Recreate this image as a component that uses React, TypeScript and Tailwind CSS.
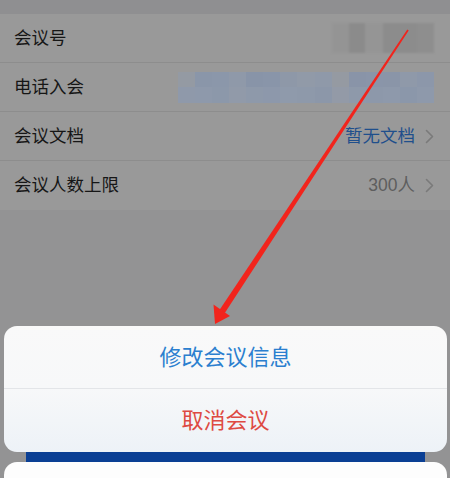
const rows = [
  { label: "会议号", kind: "blurGray" },
  { label: "电话入会", kind: "blurBlue" },
  { label: "会议文档", kind: "doc" },
  { label: "会议人数上限", kind: "limit" },
];

const blueTop = ["#949aa3", "#8a96a9", "#8b97aa", "#8f99a9", "#8894a8", "#8995a9", "#8e98a8", "#919aa8", "#8f99a9", "#959aa2", "#8994a8", "#8a95a9", "#8a95a8", "#8f99a9", "#8c97aa"];
const blueBottom = ["#8f99aa", "#8e99ab", "#8c98aa", "#919aa9", "#8e99aa", "#8d98ab", "#8f9aab", "#8e99aa", "#8c97a9", "#939aa7", "#8e99aa", "#8d98aa", "#8e99ab", "#8b97aa", "#8e99ab"];

function Chevron() {
  return (
    <svg width="9" height="15" viewBox="0 0 9 15" className="ml-[10px]">
      <path d="M1.5 1.5l6 6-6 6" fill="none" stroke="#7a7a7a" strokeWidth="1.6" strokeLinecap="round" strokeLinejoin="round" />
    </svg>
  );
}

function RowValue({ kind }: { kind: string }) {
  if (kind === "blurGray") {
    return (
      <div className="flex h-[30px] items-stretch blur-[1px]">
        <div className="w-[17px] bg-[#949494]" />
        <div className="w-[16px] bg-[#8b8b8b]" />
        <div className="w-[18px] bg-[#959595]" />
        <div className="w-[34px] bg-[#8c8c8c]" />
        <div className="w-[17px] bg-[#8e8e8e]" />
      </div>
    );
  }
  if (kind === "blurBlue") {
    return (
      <div className="flex h-[31px] w-[256px] flex-col blur-[0.6px]">
        <div className="flex h-1/2">
          {blueTop.map((c, i) => (
            <div key={i} className="flex-1" style={{ backgroundColor: c }} />
          ))}
        </div>
        <div className="flex h-1/2">
          {blueBottom.map((c, i) => (
            <div key={i} className="flex-1" style={{ backgroundColor: c }} />
          ))}
        </div>
      </div>
    );
  }
  if (kind === "doc") {
    return (
      <div className="flex items-center">
        <span className="text-[17.5px] text-[#1f4f8c]">暂无文档</span>
        <Chevron />
      </div>
    );
  }
  return (
    <div className="flex items-center">
      <span className="text-[17.5px] text-[#5e5e5e]">300人</span>
      <Chevron />
    </div>
  );
}

export default function App() {
  return (
    <div
      className="relative h-[478px] w-[450px] overflow-hidden bg-[#939394]"
      style={{ fontFamily: '"Liberation Sans", "Noto Sans CJK SC", sans-serif' }}
    >
      <div className="h-[14px] bg-[#8f8f91]" />
      <div className="bg-[#999999]">
        {rows.map((r, i) => (
          <div
            key={r.label}
            className={`flex h-[49px] items-center justify-between pl-[14px] pr-[16px] ${i < rows.length - 1 ? "border-b border-[#8d8d8d]" : ""}`}
          >
            <span className="text-[17.5px] text-[#161616]">{r.label}</span>
            <RowValue kind={r.kind} />
          </div>
        ))}
      </div>

      <div className="absolute left-[4px] right-[3px] top-[326px]">
        <div className="overflow-hidden rounded-[13px] bg-gradient-to-b from-[#f9f9f9] via-[#f7f8f9] to-[#edf2f7]">
          <div className="flex h-[63px] items-center justify-center border-b border-[#e3e5e8] text-[22px] text-[#2b7fcf]">
            修改会议信息
          </div>
          <div className="flex h-[63px] items-center justify-center text-[22px] text-[#de4a42]">
            取消会议
          </div>
        </div>
        <div className="mx-[22px] h-[10px] bg-[#0a3f94]" />
        <div className="h-[40px] rounded-t-[13px] bg-[#fdfdfd]" />
      </div>

      <svg className="pointer-events-none absolute left-0 top-0" width="450" height="478" viewBox="0 0 450 478">
        <polygon points="408.7,30.5 407.3,29.5 219.8,309.6 224.8,312.9" fill="#f2241c" />
        <polygon points="215,324 213.5,304.5 230,316" fill="#f2241c" />
      </svg>
    </div>
  );
}
